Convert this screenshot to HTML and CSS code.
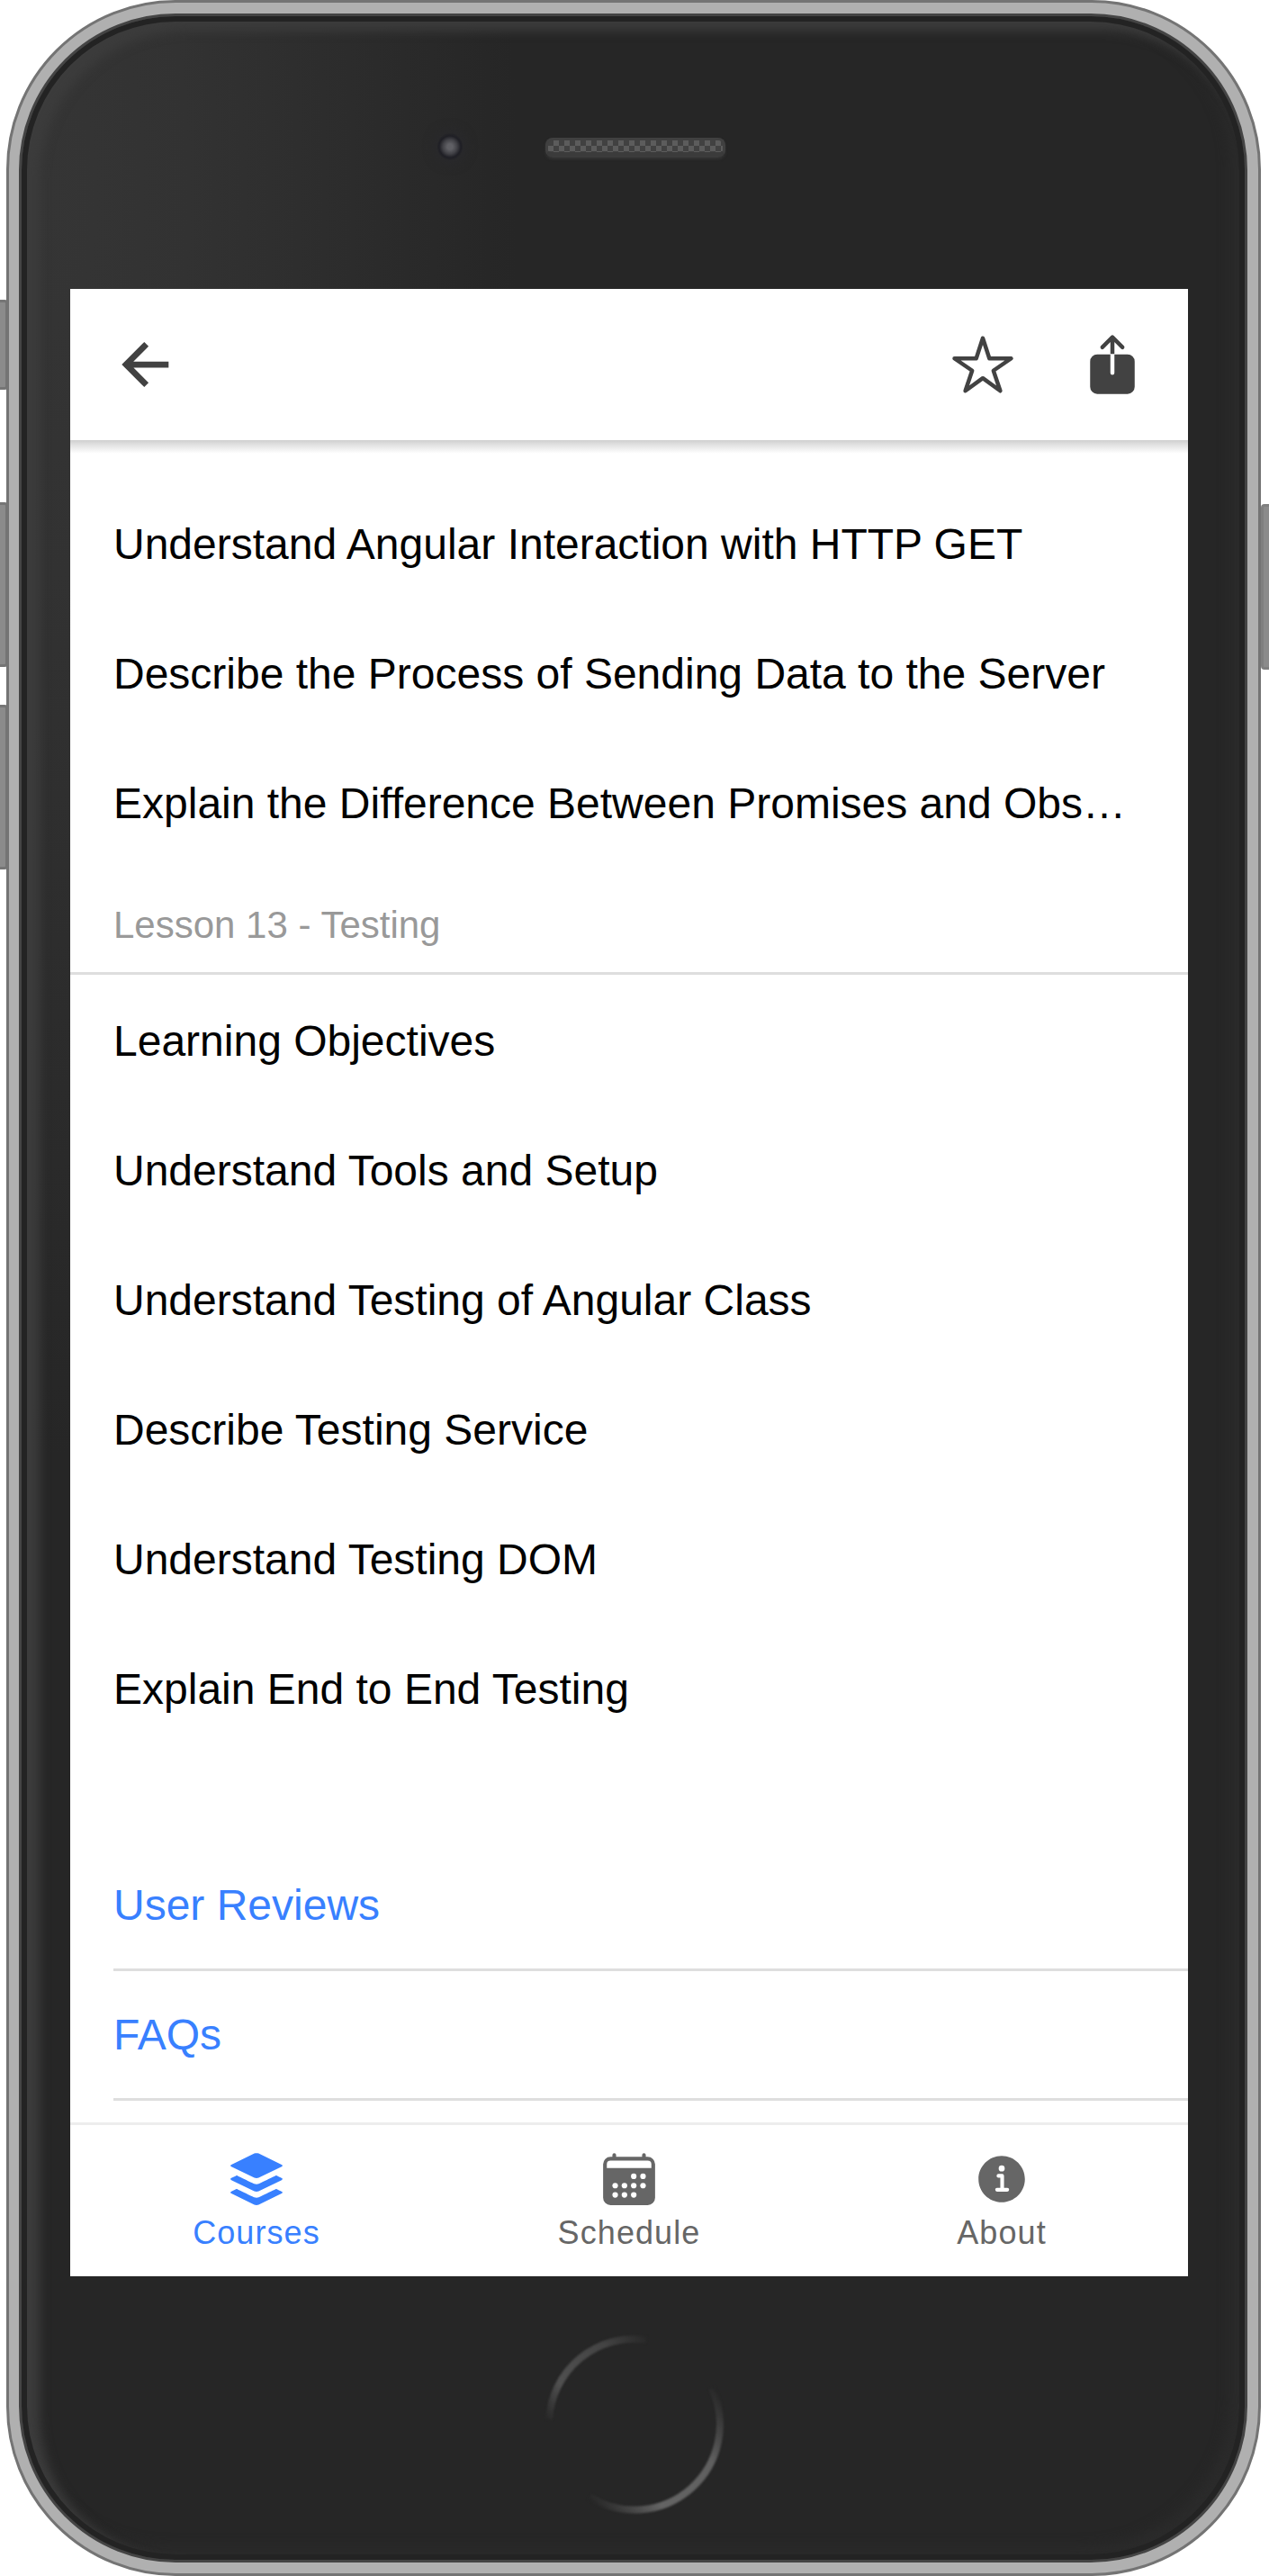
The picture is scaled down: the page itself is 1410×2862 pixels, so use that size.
FILE: index.html
```html
<!DOCTYPE html>
<html lang="en">
<head>
<meta charset="utf-8">
<title>Course</title>
<link rel="stylesheet" href="styles.css">
</head>
<body>
<div class="device">
  <span class="key key-mute"></span>
  <span class="key key-up"></span>
  <span class="key key-down"></span>
  <span class="key key-power"></span>
  <div class="shell"><div class="glass"></div></div>
  <span class="camera"></span>
  <span class="speaker"></span>
  <svg class="home" viewBox="0 0 200 200" fill="none">
    <defs>
      <linearGradient id="a" gradientUnits="userSpaceOnUse" x1="5" y1="98" x2="118" y2="5"><stop offset="0" stop-color="#262626"/><stop offset=".25" stop-color="#505050"/><stop offset=".7" stop-color="#444"/><stop offset="1" stop-color="#262626"/></linearGradient>
      <linearGradient id="b" gradientUnits="userSpaceOnUse" x1="190" y1="60" x2="48" y2="180"><stop offset="0" stop-color="#262626"/><stop offset=".3" stop-color="#606060"/><stop offset=".7" stop-color="#646464"/><stop offset="1" stop-color="#262626"/></linearGradient>
    </defs>
    <path d="M5.100 94.500A95 95 0 0 1 113.200 5.400" stroke="url(#a)" stroke-width="8"/>
    <path d="M186.100 59.400A95 95 0 0 1 49.700 180.100" stroke="url(#b)" stroke-width="8"/>
  </svg>
  <main class="screen">
    <header class="toolbar">
      <svg class="icon" viewBox="0 0 512 512" fill="none" stroke="currentColor" stroke-width="48"><path d="M244 400L100 256l144-144M120 256h292" stroke-linecap="square"/></svg>
      <div class="actions">
        <svg class="icon" viewBox="0 0 512 512"><path d="M480 208H308L256 48l-52 160H32l140 96-54 160 138-100 138 100-54-160z" fill="none" stroke="currentColor" stroke-width="32" stroke-linejoin="round"/></svg>
        <svg class="icon" viewBox="0 0 512 512" fill="currentColor"><path d="M376 176H272v145a16 16 0 01-32 0V176H136a56 56 0 00-56 56v200a56 56 0 0056 56h240a56 56 0 0056-56V232a56 56 0 00-56-56z"/><path d="M272 78.600l52.700 52.700a16 16 0 0022.600-22.600l-80-80a16 16 0 00-22.600 0l-80 80a16 16 0 0022.600 22.600L240 78.600V172h32z"/></svg>
      </div>
    </header>
    <section class="content">
      <ul class="list">
        <li class="item">Understand Angular Interaction with HTTP GET</li>
        <li class="item">Describe the Process of Sending Data to the Server</li>
        <li class="item">Explain the Difference Between Promises and Observables</li>
      </ul>
      <h2 class="divider">Lesson 13 - Testing</h2>
      <ul class="list">
        <li class="item">Learning Objectives</li>
        <li class="item">Understand Tools and Setup</li>
        <li class="item">Understand Testing of Angular Class</li>
        <li class="item">Describe Testing Service</li>
        <li class="item">Understand Testing DOM</li>
        <li class="item">Explain End to End Testing</li>
      </ul>
      <ul class="list links">
        <li class="item">User Reviews</li>
        <li class="item">FAQs</li>
      </ul>
    </section>
    <nav class="tabs">
      <a class="tab active">
        <svg class="tab-icon" viewBox="0 0 512 512" fill="currentColor"><path d="M39.900 149.200l197.400 95.400c5.100 2.400 12 3.700 18.800 3.700s13.700-1.300 18.800-3.700l197.400-95.400c10.400-5 10.400-13.100 0-18.200L274.900 35.700c-5.100-2.400-12-3.700-18.800-3.700s-13.700 1.300-18.800 3.700L39.900 131c-10.400 5.100-10.400 13.200 0 18.200z"/><path id="chev" d="M472.300 246.900s-36-17.400-40.800-19.700-6.100-2.200-11.100.1-145.600 70.200-145.600 70.200a45.700 45.700 0 01-18.800 3.800c-6.800 0-13.700-1.300-18.800-3.800 0 0-136.800-66-143.300-69.100-6.900-3.400-8.900-3.400-15.200-.4l-39 18.800c-10.400 5-10.400 13.200 0 18.200l197.400 95.300c5.100 2.500 12 3.700 18.800 3.700s13.700-1.200 18.800-3.700L472.100 265c10.600-4.900 10.600-13.100.2-18.100z"/><use href="#chev" y="116"/></svg>
        <span>Courses</span>
      </a>
      <a class="tab">
        <svg class="tab-icon" viewBox="0 0 512 512" fill="currentColor"><path fill-rule="evenodd" d="M96 64h16V48a16 16 0 0132 0v16h224V48a16 16 0 0132 0v16h16a64 64 0 0164 64v288a64 64 0 01-64 64H96a64 64 0 01-64-64V128a64 64 0 0164-64zm0 32q-32 0-32 32v32h384v-32q0-32-32-32z"/><g fill="#fff"><circle cx="296" cy="232" r="24"/><circle cx="376" cy="232" r="24"/><circle cx="136" cy="312" r="24"/><circle cx="216" cy="312" r="24"/><circle cx="296" cy="312" r="24"/><circle cx="376" cy="312" r="24"/><circle cx="136" cy="392" r="24"/><circle cx="216" cy="392" r="24"/><circle cx="296" cy="392" r="24"/></g></svg>
        <span>Schedule</span>
      </a>
      <a class="tab">
        <svg class="tab-icon" viewBox="0 0 512 512" fill="currentColor"><path d="M256 56C145.720 56 56 145.720 56 256s89.720 200 200 200 200-89.720 200-200S366.280 56 256 56zm0 82a26 26 0 11-26 26 26 26 0 0126-26zm48 226h-88a16 16 0 010-32h28v-88h-16a16 16 0 010-32h32a16 16 0 0116 16v104h28a16 16 0 010 32z"/></svg>
        <span>About</span>
      </a>
    </nav>
  </main>
</div>
</body>
</html>
```
FILE: styles.css
```css
* { box-sizing: border-box; }
body { margin: 0; background: #fff; font-family: "Liberation Sans", Arial, sans-serif; }
.device { position: relative; width: 1410px; height: 2862px; padding: 321px 90px 333px 78px; overflow: hidden; }

/* Phone body */
.shell { position: absolute; inset: 0 9px 0 7px; border-radius: 188px; background: #b0b0b0; border: 3px solid #747474; padding: 12px 12px 12px 11px; }
.glass { height: 100%; border-radius: 174px; border: 3px solid #444;
  background: radial-gradient(ellipse 520px 1400px at 30px 200px, #353535, #323232 30%, #2c2c2c 65%, #262626);
  box-shadow: inset 0 0 0 6px #232323, inset 14px 10px 12px 6px #3c3c3c, inset -10px -8px 14px 6px #2b2b2b; }
.key { position: absolute; border-radius: 4px; background: #8b8b8b; border: 3px solid #757575; }
.key-mute { left: -4px; top: 333px; width: 13px; height: 100px; }
.key-up { left: -4px; top: 558px; width: 13px; height: 183px; }
.key-down { left: -4px; top: 783px; width: 13px; height: 183px; }
.key-power { right: -4px; top: 560px; width: 13px; height: 172px; border-color: #808080; }
.key-power { height: 184px; }
.camera { position: absolute; left: 486px; top: 148px; width: 28px; height: 30px; border-radius: 50%; background: radial-gradient(circle at 50% 50%, #606065 0 3px, #414146 8px, #1f1f25 12px, #262629 15px); box-shadow: 0 0 12px 4px #29292c; }
.speaker { position: absolute; left: 606px; top: 153px; width: 200px; height: 22px; border-radius: 8px; border: 3px solid #404040; border-bottom: 6px solid #3b3b3b; background: conic-gradient(#5c5c5c 25%, #414141 0 50%, #5c5c5c 0 75%, #414141 0) 0 0 / 12px 12px; box-shadow: 0 2px 3px #333; }
.home { position: absolute; left: 605px; top: 2594px; width: 200px; height: 200px; filter: blur(.8px); }

/* Application */
.screen { position: relative; display: flex; flex-direction: column; width: 1242px; height: 2208px; background: #fff; overflow: hidden; }
.toolbar { position: relative; display: flex; flex: none; align-items: center; justify-content: space-between; height: 168px; padding: 0 48px; color: #424242; }
.toolbar::after { content: ""; position: absolute; left: 0; right: 0; top: 100%; height: 15px; background: linear-gradient(#cfcfcf, #e4e4e4 40%, #fff); }
.actions { display: flex; gap: 72px; }
.icon { width: 72px; height: 72px; }
.content { flex: 1; min-height: 0; overflow: hidden; padding-top: 44px; }
.list { list-style: none; margin: 0; padding: 0 0 0 48px; }
.item { height: 144px; padding-right: 48px; line-height: 144px; font-size: 48px; color: #000; white-space: nowrap; overflow: hidden; text-overflow: ellipsis; }
.divider { display: flex; align-items: center; height: 118px; margin: 0 0 2px; padding: 10px 48px 0; border-bottom: 3px solid #dedede; font-size: 42px; font-weight: 400; color: #999; }
.links { padding-top: 97px; }
.links .item { line-height: 142px; color: #3880ff; border-bottom: 3px solid #dedede; }
.tabs { display: flex; flex: none; height: 171px; border-top: 3px solid #ededed; background: #fff; color: #666; }
.tab { display: flex; flex: 1; flex-direction: column; align-items: center; padding-top: 27px; font-size: 36px; line-height: 42px; letter-spacing: 1.080px; }
.tab-icon { width: 66px; height: 66px; margin-bottom: 6px; }
.active { color: #3880ff; }
```
